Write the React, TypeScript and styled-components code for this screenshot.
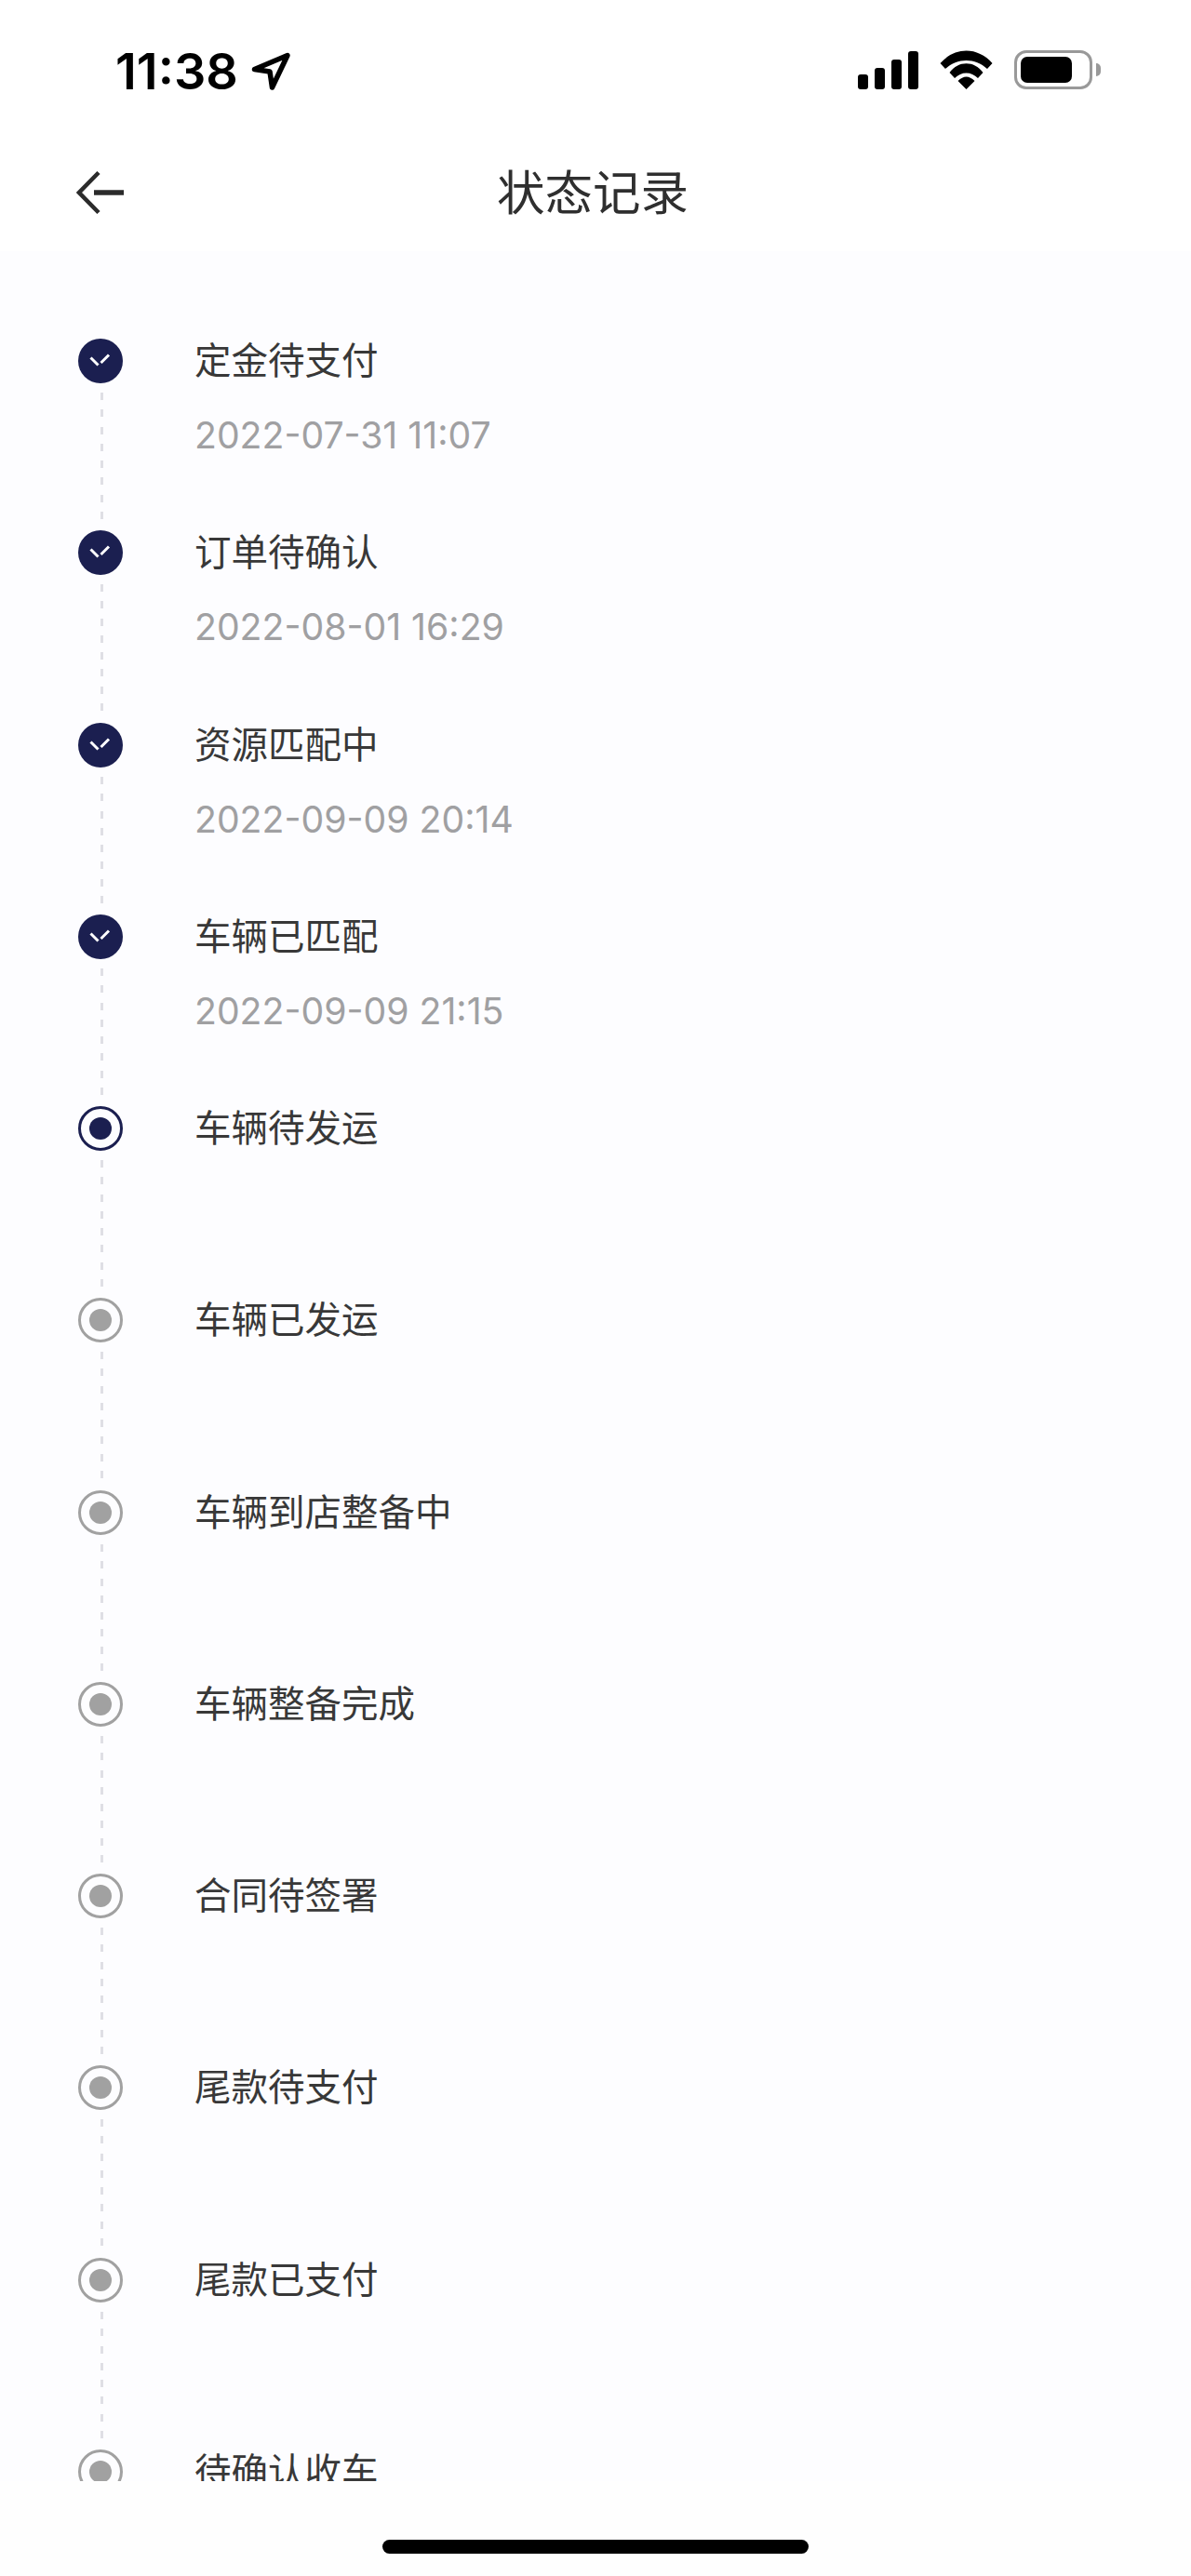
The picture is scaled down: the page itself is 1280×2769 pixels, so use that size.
import React from 'react';
import styled, { createGlobalStyle } from 'styled-components';

const NAVY = '#1b1f50';
const GREY = '#a1a1a1';
const RECORDS: { title: string; time?: string; state: 'done' | 'current' | 'todo' }[] = [
    { title: '定金待支付', time: '2022-07-31 11:07', state: 'done' },
    { title: '订单待确认', time: '2022-08-01 16:29', state: 'done' },
    { title: '资源匹配中', time: '2022-09-09 20:14', state: 'done' },
    { title: '车辆已匹配', time: '2022-09-09 21:15', state: 'done' },
    { title: '车辆待发运', state: 'current' },
    { title: '车辆已发运', state: 'todo' },
    { title: '车辆到店整备中', state: 'todo' },
    { title: '车辆整备完成', state: 'todo' },
    { title: '合同待签署', state: 'todo' },
    { title: '尾款待支付', state: 'todo' },
    { title: '尾款已支付', state: 'todo' },
    { title: '待确认收车', state: 'todo' },
];

const GlobalStyle = createGlobalStyle`
    html, body {
        margin: 0;
        padding: 0;
        background: #fff;
    }
`;

const Screen = styled.div`
    height: 100vh;
    display: flex;
    flex-direction: column;
    overflow: hidden;
    background: #fff;
    font-family: Inter, "Noto Sans CJK SC", sans-serif;
`;

const StatusBar = styled.div`
    height: 150px;
    flex: none;
    display: flex;
    align-items: center;
    justify-content: space-between;
    padding: 0 97px 0 124px;
`;

const TimeGroup = styled.div`
    display: flex;
    align-items: center;
    gap: 13.5px;
    margin-top: 3px;
`;

const Clock = styled.span`
    font-size: 54px;
    font-weight: 600;
    line-height: 54px;
    letter-spacing: 0;
    color: #000;
`;

const StatusIcons = styled.div`
    display: flex;
    align-items: center;
    gap: 23px;
`;

const SignalBars = styled.div`
    display: flex;
    align-items: flex-end;
    gap: 7px;
    height: 41px;
`;

const SignalBar = styled.span<{ $height: number }>`
    width: 11px;
    height: ${(p) => p.$height}px;
    border-radius: 3px;
    background: #000;
`;

const Battery = styled.div`
    display: flex;
    align-items: center;
    gap: 4px;
`;

const BatteryShell = styled.div`
    width: 84px;
    height: 42px;
    box-sizing: border-box;
    border: 3px solid #999;
    border-radius: 13px;
    padding: 4px;
`;

const BatteryLevel = styled.div`
    width: 55px;
    height: 28px;
    border-radius: 7px;
    background: #000;
`;

const BatteryNub = styled.div`
    width: 5px;
    height: 14px;
    border-radius: 0 5px 5px 0;
    background: #999;
`;

const NavBar = styled.div`
    height: 114px;
    flex: none;
    margin-bottom: 6px;
    display: grid;
    grid-template-columns: 1fr auto 1fr;
    align-items: center;
    padding: 0 88px 0 82px;
`;

const NavTitle = styled.h1`
    margin: 0;
    font-size: 51.5px;
    font-weight: 400;
    line-height: 60px;
    color: #2f2f2f;
`;

const List = styled.div`
    height: 2397px;
    flex: none;
    overflow: hidden;
    box-sizing: border-box;
    padding: 94px 0 0 84px;
    background: #fdfdff;
`;

const Row = styled.div`
    height: 206.25px;
    display: flex;
    gap: 77px;
`;

const Rail = styled.div`
    width: 48px;
    flex: none;
    display: flex;
    flex-direction: column;
    align-items: center;
`;

const Connector = styled.div`
    flex: 1;
    width: 3px;
    margin: 10px 0 3px 2px;
    background: repeating-linear-gradient(to bottom, #dfdfe5 0 8px, transparent 8px 18.3px);
`;

const Radio = styled.div<{ $color: string }>`
    width: 48px;
    height: 48px;
    flex: none;
    box-sizing: border-box;
    border: 3.5px solid ${(p) => p.$color};
    border-radius: 50%;
    display: flex;
    align-items: center;
    justify-content: center;

    &::after {
        content: '';
        width: 24px;
        height: 24px;
        border-radius: 50%;
        background: ${(p) => p.$color};
    }
`;

const RecordTitle = styled.div`
    font-size: 39.5px;
    line-height: 48px;
    color: #383838;
`;

const RecordTime = styled.div`
    margin-top: 32px;
    font-size: 39.2px;
    line-height: 48px;
    color: #a0a0a2;
`;

const Footer = styled.div`
    flex: 1;
    display: flex;
    justify-content: center;
    padding-top: 63px;
    background: #fefefe;
`;

const HomeIndicator = styled.div`
    width: 458px;
    height: 15px;
    border-radius: 8px;
    background: #000;
`;

const DoneIcon: React.FC = () => (
    <svg width="48" height="48" viewBox="0 0 48 48" style={{ flex: 'none' }}>
        <circle cx="24" cy="24" r="24" fill={NAVY} />
        <path d="M13.500 20.500l8 8M24.500 26l8.500-8.500" stroke="#fff" strokeWidth="3" fill="none" />
    </svg>
);

const App: React.FC = () => {
    return (
        <Screen>
            <GlobalStyle />
            <StatusBar>
                <TimeGroup>
                    <Clock>11:38</Clock>
                    <svg width="45" height="45" viewBox="0 0 45 45">
                        <path
                            d="M4.500 20.500L40 5.500L23.500 40L21 23Z"
                            fill="none"
                            stroke="#000"
                            strokeWidth="5.500"
                            strokeLinejoin="round"
                        />
                    </svg>
                </TimeGroup>
                <StatusIcons>
                    <SignalBars>
                        {[16, 23, 32, 41].map((h) => (
                            <SignalBar key={h} $height={h} />
                        ))}
                    </SignalBars>
                    <svg width="57" height="42" viewBox="0 0 57 42">
                        <path d="M0.500 14C16 -4 41 -4 56.500 14L51 20C38 8 19 8 6 20Z" fill="#000" />
                        <path d="M10.500 24C20 11 37 11 46.500 24L41 30C34 22.500 23 22.500 16 30Z" fill="#000" />
                        <path d="M19.500 33Q28.500 24 37.500 33L28.500 42Z" fill="#000" />
                    </svg>
                    <Battery>
                        <BatteryShell>
                            <BatteryLevel />
                        </BatteryShell>
                        <BatteryNub />
                    </Battery>
                </StatusIcons>
            </StatusBar>
            <NavBar>
                <svg width="52" height="48" viewBox="0 0 52 48">
                    <path d="M24 2.500L3 24L24 45.500" fill="none" stroke="#2b2b2b" strokeWidth="4.500" />
                    <path d="M19 24H51" fill="none" stroke="#2b2b2b" strokeWidth="5.500" />
                </svg>
                <NavTitle>状态记录</NavTitle>
            </NavBar>
            <List>
                {RECORDS.map((record, i) => (
                    <Row key={record.title}>
                        <Rail>
                            {record.state === 'done' && <DoneIcon />}
                            {record.state === 'current' && <Radio $color={NAVY} />}
                            {record.state === 'todo' && <Radio $color={GREY} />}
                            {i < RECORDS.length - 1 && <Connector />}
                        </Rail>
                        <div>
                            <RecordTitle>{record.title}</RecordTitle>
                            {record.time && <RecordTime>{record.time}</RecordTime>}
                        </div>
                    </Row>
                ))}
            </List>
            <Footer>
                <HomeIndicator />
            </Footer>
        </Screen>
    );
};

export default App;
